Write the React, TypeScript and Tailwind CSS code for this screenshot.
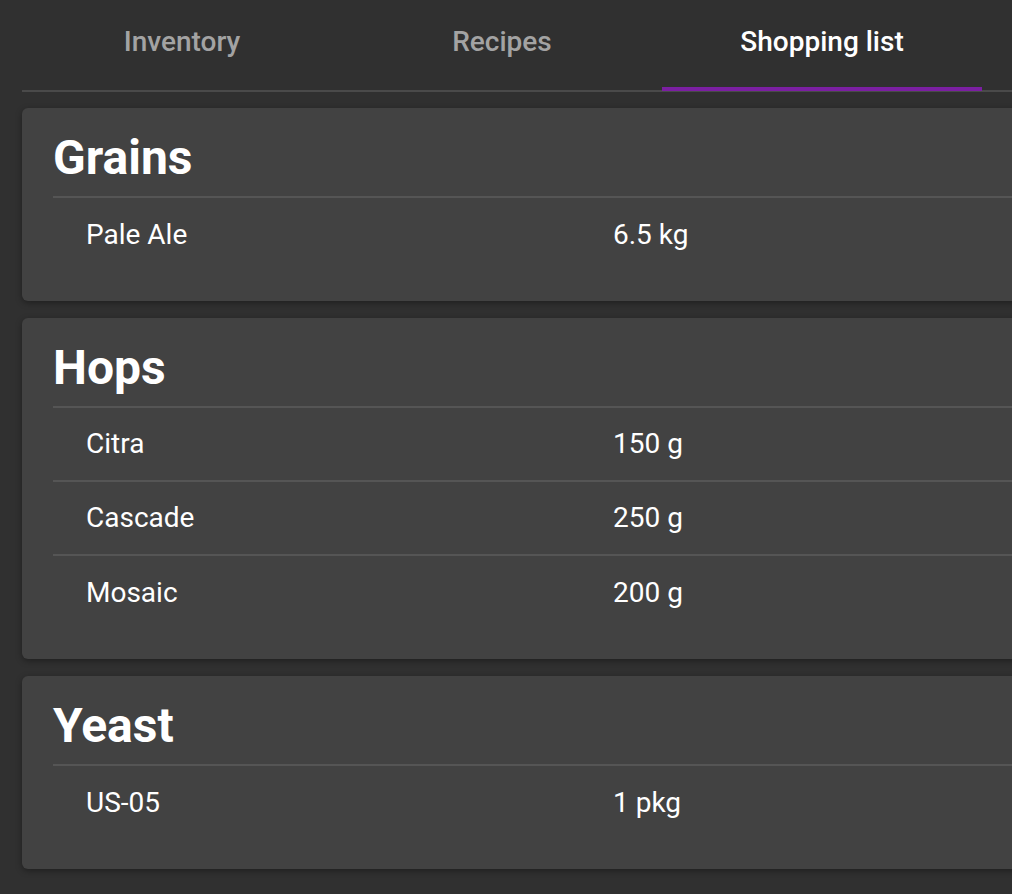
import { useState } from 'react'

type Item = { name: string; amount: string }
type Section = { title: string; items: Item[] }

const TABS = ['Inventory', 'Recipes', 'Shopping list']

const SECTIONS: Section[] = [
  { title: 'Grains', items: [{ name: 'Pale Ale', amount: '6.5 kg' }] },
  {
    title: 'Hops',
    items: [
      { name: 'Citra', amount: '150 g' },
      { name: 'Cascade', amount: '250 g' },
      { name: 'Mosaic', amount: '200 g' },
    ],
  },
  { title: 'Yeast', items: [{ name: 'US-05', amount: '1 pkg' }] },
]

function Tabs({ active, onChange }: { active: number; onChange: (i: number) => void }) {
  return (
    <div className="flex border-b-2 border-[#4a4a4a] w-[1100px]">
      {TABS.map((t, i) => (
        <button
          key={t}
          onClick={() => onChange(i)}
          className={`relative w-[320px] h-[88px] pb-[8px] text-[28px] font-medium ${
            i === active ? 'text-white' : 'text-[#a3a3a3]'
          }`}
        >
          {t}
          {i === active && (
            <span className="absolute left-0 right-0 bottom-[-1px] h-[4px] bg-[#7b1fa2]" />
          )}
        </button>
      ))}
    </div>
  )
}

function SectionCard({ section }: { section: Section }) {
  return (
    <div className="w-[1138px] rounded-[6px] bg-[#424242] shadow-[0_2px_6px_rgba(0,0,0,0.35)] px-[31px] pb-[29px]">
      <h2 className="h-[90px] flex items-center pt-[12px] text-[48px] font-bold text-white leading-none border-b-2 border-[#555555]">
        {section.title}
      </h2>
      {section.items.map((item, i) => (
        <div
          key={item.name}
          className={`flex h-[74px] items-center text-[28px] text-white ${
            i < section.items.length - 1 ? 'border-b-2 border-[#555555]' : ''
          }`}
        >
          <span className="w-[527px] pl-[33px]">{item.name}</span>
          <span className="pl-[33px]">{item.amount}</span>
        </div>
      ))}
    </div>
  )
}

export default function App() {
  const [active, setActive] = useState(2)
  return (
    <div
      className="min-h-[894px] bg-[#303030] overflow-hidden pl-[22px] pt-[2px]"
      style={{ fontFamily: 'Roboto, "Liberation Sans", sans-serif' }}
    >
      <Tabs active={active} onChange={setActive} />
      <div className="flex flex-col gap-[17px] pt-[16px] pb-[24px]">
        {SECTIONS.map((s) => (
          <SectionCard key={s.title} section={s} />
        ))}
      </div>
    </div>
  )
}
